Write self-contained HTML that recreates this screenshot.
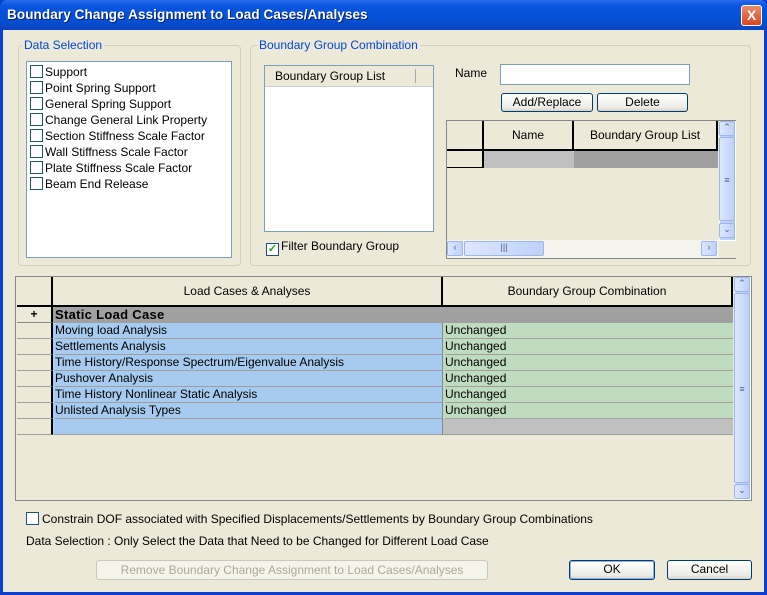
<!DOCTYPE html>
<html><head><meta charset="utf-8"><style>
*{box-sizing:border-box;margin:0;padding:0}
body{width:767px;height:595px;overflow:hidden;background:#0a3fd0;font-family:"Liberation Sans",sans-serif;font-size:12px;color:#000;position:relative}
.a{position:absolute}
#title{left:0;top:0;width:767px;height:30px;background:linear-gradient(#2a6cf0,#0855dd 20%,#0552d6 60%,#0846c0);border-radius:7px 7px 0 0}
#title span{position:absolute;left:7px;top:7px;color:#fff;font-weight:bold;font-size:13.5px;letter-spacing:0.1px;text-shadow:1px 1px #0a1e6e}
#close{left:741px;top:5px;width:21px;height:21px;background:linear-gradient(#e98b6e,#d9461e);border:1px solid #fff;border-radius:3px;color:#fff;font-weight:bold;font-size:14px;text-align:center;line-height:19px}
#body{left:3px;top:30px;width:761px;height:562px;background:#ece9d8}
.grp{border:1px solid #d0d0bf;border-radius:4px}
.gl{background:#ece9d8;color:#0046d5;padding:0 2px;font-size:12px}
.lb{background:#fff;border:1px solid #7f9db9}
.cb{display:inline-block;width:13px;height:13px;border:1px solid #1c5180;background:#fff;vertical-align:-2px;margin-right:2px}
.btn{border:1px solid #003c74;border-radius:3px;background:linear-gradient(#fff,#ecebe6 80%,#d6d0c5);text-align:center;line-height:17px}
.hdr{background:#ece9d8;border-right:2px solid #000;border-bottom:2px solid #000;text-align:center}
.row{height:16px;line-height:15px;border-bottom:1px solid #a0a0a0}
.sb{background:linear-gradient(90deg,#c4d6fb,#b3cafa);border:1px solid #fff}
.sbt{background:linear-gradient(90deg,#dbe7fd,#bdd1f9);border:1px solid #9fb7e8;border-radius:2px;color:#4d6185;font-size:9px;text-align:center}
</style></head><body>
<div id="title" class="a"><span>Boundary Change Assignment to Load Cases/Analyses</span></div>
<div id="close" class="a">X</div>
<div id="body" class="a"></div>

<!-- Data selection -->
<div class="a grp" style="left:18px;top:45px;width:223px;height:221px"></div>
<div class="a gl" style="left:22px;top:38px">Data Selection</div>
<div class="a lb" style="left:26px;top:61px;width:206px;height:197px;padding:2px 0 0 3px;line-height:16px">
<div><span class="cb"></span>Support</div>
<div><span class="cb"></span>Point Spring Support</div>
<div><span class="cb"></span>General Spring Support</div>
<div><span class="cb"></span>Change General Link Property</div>
<div><span class="cb"></span>Section Stiffness Scale Factor</div>
<div><span class="cb"></span>Wall Stiffness Scale Factor</div>
<div><span class="cb"></span>Plate Stiffness Scale Factor</div>
<div><span class="cb"></span>Beam End Release</div>
</div>

<!-- Boundary group combination -->
<div class="a grp" style="left:250px;top:45px;width:501px;height:221px"></div>
<div class="a gl" style="left:257px;top:38px">Boundary Group Combination</div>
<div class="a lb" style="left:264px;top:65px;width:170px;height:167px">
<div style="height:21px;border-bottom:1px solid #ccc;background:#ece9d8;padding:3px 0 0 10px">Boundary Group List<span style="position:absolute;left:150px;top:3px;width:1px;height:14px;background:#aaa"></span></div>
</div>
<div class="a" style="left:266px;top:239px"><span class="cb" style="text-align:center;line-height:10px;color:#21a121;font-weight:bold;font-size:11px">✓</span>Filter Boundary Group</div>
<div class="a" style="left:455px;top:66px">Name</div>
<div class="a" style="left:500px;top:64px;width:190px;height:21px;background:#fff;border:1px solid #7f9db9"></div>
<div class="a btn" style="left:501px;top:93px;width:92px;height:19px">Add/Replace</div>
<div class="a btn" style="left:597px;top:93px;width:91px;height:19px">Delete</div>
<div class="a" style="left:446px;top:120px;width:290px;height:139px;border:1px solid #888;border-right:none;background:#ece9d8"></div>
<div class="a hdr" style="left:447px;top:121px;width:37px;height:30px"></div>
<div class="a hdr" style="left:484px;top:121px;width:90px;height:30px;line-height:28px">Name</div>
<div class="a hdr" style="left:574px;top:121px;width:144px;height:30px;line-height:28px">Boundary Group List</div>
<div class="a" style="left:447px;top:151px;width:37px;height:17px;border-right:2px solid #000;border-bottom:1px solid #000;background:#ece9d8"></div>
<div class="a" style="left:484px;top:151px;width:90px;height:17px;background:#c0c0c0"></div>
<div class="a" style="left:574px;top:151px;width:144px;height:17px;background:#a0a0a0"></div>
<div class="a sb" style="left:719px;top:121px;width:17px;height:120px"></div>
<div class="a sbt" style="left:719px;top:121px;width:16px;height:15px">⌃</div>
<div class="a sbt" style="left:719px;top:137px;width:16px;height:84px;line-height:84px">≡</div>
<div class="a sbt" style="left:719px;top:223px;width:16px;height:15px">⌄</div>
<div class="a" style="left:447px;top:240px;width:272px;height:18px;background:#f4f3ee"></div>
<div class="a sbt" style="left:447px;top:241px;width:16px;height:15px">‹</div>
<div class="a sbt" style="left:464px;top:241px;width:80px;height:15px">|||</div>
<div class="a sbt" style="left:701px;top:241px;width:16px;height:15px">›</div>

<!-- main grid -->
<div class="a" style="left:15px;top:276px;width:737px;height:225px;border:1px solid #888;background:#ece9d8"></div>
<div class="a hdr" style="left:17px;top:277px;width:36px;height:30px"></div>
<div class="a hdr" style="left:53px;top:277px;width:390px;height:30px;line-height:28px">Load Cases &amp; Analyses</div>
<div class="a hdr" style="left:443px;top:277px;width:290px;height:30px;line-height:28px">Boundary Group Combination</div>
<div class="a" style="left:17px;top:307px;width:716px">
<div style="display:flex;height:16px"><div style="width:36px;border-right:2px solid #000;border-bottom:1px solid #888;text-align:center;font-weight:bold;line-height:15px;background:#ece9d8">+</div><div class="row" style="flex:1;background:#a0a0a0;font-weight:bold;font-size:13px;padding-left:2px;letter-spacing:0.3px">Static Load Case</div></div>
</div>
<div class="a" style="left:17px;top:323px;width:716px;line-height:15px">
<div style="display:flex"><div style="width:36px"></div><div style="width:390px"></div></div>
</div>
<div class="a" style="left:17px;top:323px;width:36px">
<div class="row" style="border-right:2px solid #000;background:#ece9d8"></div><div class="row" style="border-right:2px solid #000;background:#ece9d8"></div><div class="row" style="border-right:2px solid #000;background:#ece9d8"></div><div class="row" style="border-right:2px solid #000;background:#ece9d8"></div><div class="row" style="border-right:2px solid #000;background:#ece9d8"></div><div class="row" style="border-right:2px solid #000;background:#ece9d8"></div><div class="row" style="border-right:2px solid #000;background:#ece9d8"></div>
</div>
<div class="a" style="left:53px;top:323px;width:390px;background:#a6caf0;border-right:1px solid #888;padding-left:2px">
<div class="row">Moving load Analysis</div><div class="row">Settlements Analysis</div><div class="row">Time History/Response Spectrum/Eigenvalue Analysis</div><div class="row">Pushover Analysis</div><div class="row">Time History Nonlinear Static Analysis</div><div class="row">Unlisted Analysis Types</div><div class="row"></div>
</div>
<div class="a" style="left:443px;top:323px;width:290px;background:#c0dcc0;padding-left:2px">
<div class="row">Unchanged</div><div class="row">Unchanged</div><div class="row">Unchanged</div><div class="row">Unchanged</div><div class="row">Unchanged</div><div class="row">Unchanged</div><div class="row" style="background:#c0c0c0;margin-left:-2px"></div>
</div>
<div class="a sb" style="left:734px;top:277px;width:17px;height:223px"></div>
<div class="a sbt" style="left:734px;top:277px;width:16px;height:15px">⌃</div>
<div class="a sbt" style="left:734px;top:293px;width:16px;height:190px;line-height:190px">≡</div>
<div class="a sbt" style="left:734px;top:484px;width:16px;height:15px">⌄</div>

<div class="a" style="left:26px;top:512px"><span class="cb" style="margin-right:3px"></span>Constrain DOF associated with Specified Displacements/Settlements by Boundary Group Combinations</div>
<div class="a" style="left:26px;top:534px">Data Selection : Only Select the Data that Need to be Changed for Different Load Case</div>
<div class="a" style="left:96px;top:560px;width:392px;height:20px;border:1px solid #c9c7ba;border-radius:3px;color:#aca899;text-align:center;line-height:18px;background:#f5f4ea">Remove Boundary Change Assignment to Load Cases/Analyses</div>
<div class="a btn" style="left:569px;top:560px;width:86px;height:20px;border-color:#003c74;box-shadow:inset 0 0 0 1px #8fb0ec">OK</div>
<div class="a btn" style="left:667px;top:560px;width:85px;height:20px">Cancel</div>
</body></html>
